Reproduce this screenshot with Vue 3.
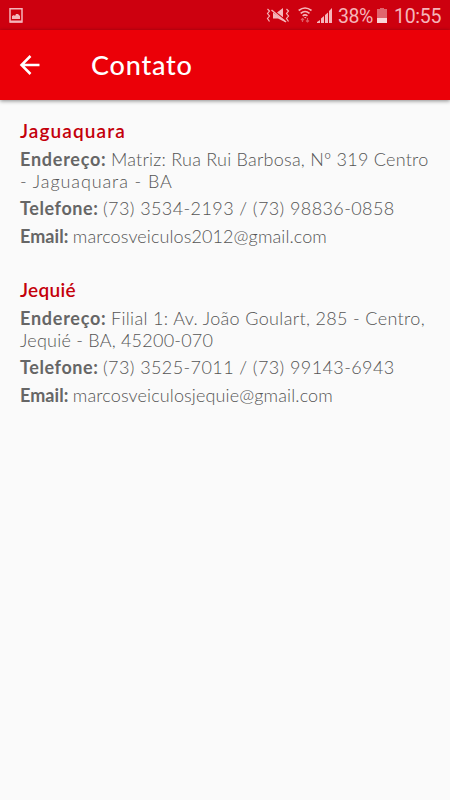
<script setup>
import { ref } from "vue";

// letter spacing is given per piece of text, in px
const contacts = ref([
  {
    city: "Jaguaquara",
    space: 1.1,
    rows: [
      { label: "Endereço:", ls: 0.75, lines: [{ text: "Matriz: Rua Rui Barbosa, Nº 319 Centro", ls: 0.24 }, { text: "- Jaguaquara - BA", ls: 0.9 }] },
      { label: "Telefone:", ls: 0.6, lines: [{ text: "(73) 3534-2193 / (73) 98836-0858", ls: 0.41 }] },
      { label: "Email:", ls: 0.05, lines: [{ text: "marcosveiculos2012@gmail.com", ls: 0.1 }] },
    ],
  },
  {
    city: "Jequié",
    space: 0.3,
    rows: [
      { label: "Endereço:", ls: 0.75, lines: [{ text: "Filial 1: Av. João Goulart, 285 - Centro,", ls: 0.35 }, { text: "Jequié - BA, 45200-070", ls: 0.23 }] },
      { label: "Telefone:", ls: 0.6, lines: [{ text: "(73) 3525-7011 / (73) 99143-6943", ls: 0.41 }] },
      { label: "Email:", ls: 0.05, lines: [{ text: "marcosveiculosjequie@gmail.com", ls: 0.13 }] },
    ],
  },
]);
</script>

<template>
  <div class="screen">
    <div class="status">
      <svg class="picture" width="14" height="15" viewBox="0 0 14 15">
        <path d="M1 .8H13V14H1Z" fill="none" stroke="#f5b5ba" stroke-width="1.5" />
        <path d="M1 13.5H13" stroke="#f5b5ba" stroke-width="2" />
        <path d="M3 11V8L5 7L6 8L7 6H9L11 8V11Z" fill="#f5b5ba" />
      </svg>
      <svg class="icons" width="68" height="18" viewBox="265 6 68 18">
        <g fill="none" stroke="#f5b5ba" stroke-width="1.2">
          <path d="M267.5 9L269.5 11L267.5 13.5L269.5 16L267.5 18.5L269.5 21.5" />
          <path d="M286.5 9L288.5 11L286.5 13.5L288.5 16L286.5 18.5L288.5 21.5" />
        </g>
        <path d="M273 12.5L285 20.5V22L278 18.5H273Z" fill="#f5b5ba" />
        <path d="M277 12.5L283 8V17.2Z" fill="#f5b5ba" />
        <path d="M271.5 10L286 22" stroke="#f5b5ba" stroke-width="1.5" />
        <g fill="none" stroke="#f5b5ba" stroke-width="1.6">
          <path d="M298.7 10.5Q305 5.5 311.5 10.5" />
          <path d="M300.7 13.3Q305 9.7 309.5 13.3" />
          <path d="M302.7 15.8Q305 13.8 307.5 15.8" />
        </g>
        <path d="M304 17H306.5L305.2 18.5Z" fill="#f5b5ba" />
        <path d="M302.5 22V18M301 20L302.5 18.5L304 20M307.5 18V22M306 20.5L307.5 22L309 20.5" fill="none" stroke="#df5b65" stroke-width="1.2" />
        <path d="M317 23V22L320 20V23ZM321 23V18.5L324 16V23ZM325 23V15L328 12.5V23ZM329 23V11L332 8V23Z" fill="#f5b5ba" />
      </svg>
      <span class="percent">38%</span>
      <svg class="battery" width="10" height="15" viewBox="0 0 10 15">
        <path d="M3 0H7V1H10V15H0V1H3Z" fill="#e0656e" />
        <path d="M0 10H10V15H0Z" fill="#f9d5d8" />
      </svg>
      <span class="clock">10:55</span>
    </div>

    <header class="bar">
      <svg width="22" height="20" viewBox="0 0 22 20">
        <path d="M20.5 10H2.5M11.5 1L2.5 10L11.5 19" fill="none" stroke="#fff" stroke-width="2.5" />
      </svg>
      <h1>Contato</h1>
    </header>

    <main>
      <section v-for="contact in contacts" :key="contact.city">
        <h2><span :style="{ letterSpacing: contact.space + 'px' }">{{ contact.city }}</span></h2>
        <p v-for="row in contact.rows" :key="row.label">
          <b :style="{ letterSpacing: row.ls + 'px' }">{{ row.label }}</b>
          <template v-for="(line, i) in row.lines" :key="i">
            <br v-if="i > 0">
            <span :class="{ first: i === 0 }" :style="{ letterSpacing: line.ls + 'px' }">{{ line.text }}</span>
          </template>
        </p>
      </section>
    </main>
  </div>
</template>

<style>
body {
  background: #fafafa;
}
</style>

<style scoped>
.screen {
  height: 800px;
  overflow: hidden;
  background: #fafafa;
  font-family: Lato, sans-serif;
}

.status {
  box-sizing: border-box;
  height: 30px;
  padding: 0 9px;
  display: flex;
  align-items: center;
  background: #cd000f;
  color: #f5b5ba;
  font-family: Roboto, sans-serif;
  font-size: 19.5px;
  white-space: nowrap;
}

.status svg {
  flex: none;
}

.icons {
  margin-left: auto;
}

.percent {
  margin: 3px 0 0 5px;
  width: 36px;
  letter-spacing: -0.4px;
}

.battery {
  margin: 1px 7px 0 3px;
}

.clock {
  margin-top: 3px;
  width: 47px;
  letter-spacing: -0.3px;
}

.bar {
  height: 70px;
  padding-left: 19px;
  display: flex;
  align-items: center;
  background: #eb0008;
  box-shadow: 0 1px 4px rgba(0, 0, 0, 0.45);
}

h1 {
  margin: -2px 0 0 50px;
  color: #fff;
  font-size: 27px;
  font-weight: 500;
  letter-spacing: 0.8px;
}

main {
  padding: 20px 0 0 20px;
}

section {
  height: 159px;
}

h2 {
  margin: 0 0 6px;
  color: #c4000b;
  font-size: 19px;
  font-weight: 600;
  line-height: 22px;
}

p {
  margin: 0 0 6px;
  color: #555;
  font-size: 18px;
  font-weight: 300;
  line-height: 22px;
  white-space: nowrap;
}

h2 + p {
  margin-bottom: 5px;
}

b {
  color: #666;
  font-weight: 700;
}

.first {
  margin-left: 4.5px;
}
</style>
